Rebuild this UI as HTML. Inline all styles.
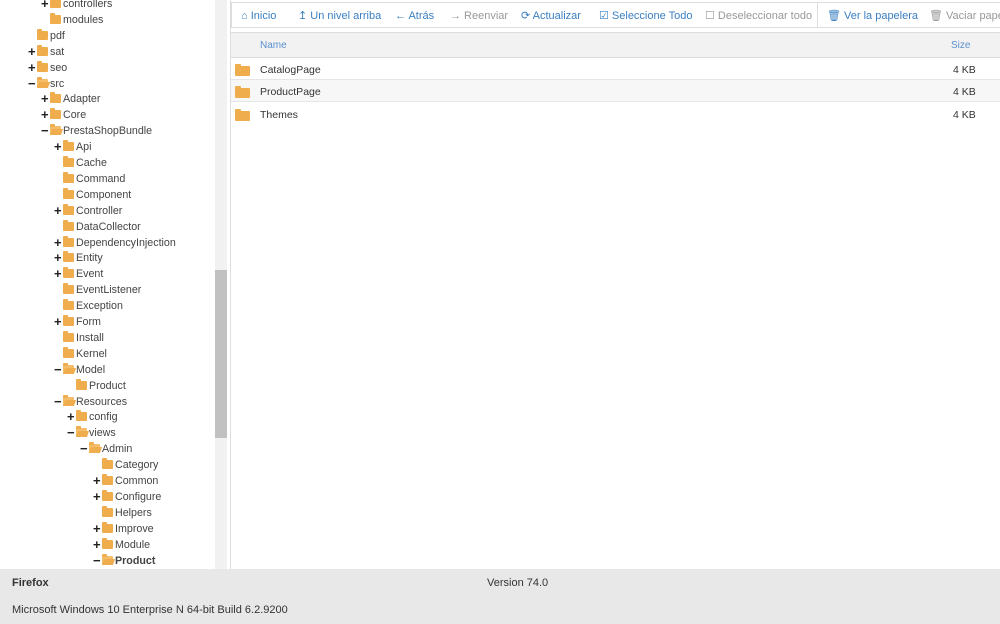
<!DOCTYPE html>
<html><head><meta charset="utf-8"><style>
*{margin:0;padding:0;box-sizing:border-box}
body{width:1000px;height:624px;overflow:hidden;background:#fff;font-family:"Liberation Sans",sans-serif;position:relative;color:#333}
.r{position:absolute;height:16px;font-size:10.7px;line-height:16px;color:#444;white-space:nowrap}
.f{position:absolute;top:3px;width:11px;height:9px;background:#f0ad4e;border-radius:1px}
.f:before{content:"";position:absolute;left:0;top:-2px;width:5px;height:3px;background:#f0ad4e;border-radius:1px 1px 0 0}
.fo{background:#f5bd6a}
.fo:after{content:"";position:absolute;left:1px;top:3px;width:11px;height:6px;background:#f0ad4e;transform:skewX(-20deg)}
.p{position:absolute;top:0;font-weight:bold;font-size:13px;color:#222}
.sb{position:absolute;left:215px;top:0;width:12px;height:569px;background:#f1f1f1}
.th{position:absolute;left:215px;top:270px;width:12px;height:168px;background:#c1c1c1}
.rp{position:absolute;left:230px;top:0;width:770px;height:569px;border-left:1px solid #ddd}
.tb{position:absolute;left:231px;top:2px;width:780px;height:26px;border:1px solid #ddd;font-size:11px;line-height:26px}
.tb span{position:absolute;top:0;color:#3a7fc1;white-space:nowrap}
.tb .d{color:#999}
.hd{position:absolute;left:231px;top:32px;width:769px;height:26px;background:#f2f2f2;border-top:1px solid #ddd;border-bottom:1px solid #ddd;font-size:10px;line-height:26px;color:#5b8fd0}
.row{position:absolute;left:231px;width:769px;height:22px;font-size:10.5px;line-height:24px;color:#333;border-bottom:1px solid #e6e6e6}
.row .f{left:4px;top:8px;width:15px;height:10px}
.row .f:before{width:6px}
.ft{position:absolute;left:0;top:569px;width:1000px;height:55px;background:#e8e8e8;font-size:11px;color:#333}
</style></head><body>
<div class="sb"></div><div class="th"></div>
<div id="tree"></div>
<div class="rp"></div>
<div class="tb">
<span style="left:9px">⌂ Inicio</span>
<span style="left:66px">↥ Un nivel arriba</span>
<span style="left:163px">← Atrás</span>
<span class="d" style="left:218px">→ Reenviar</span>
<span style="left:289px">⟳ Actualizar</span>
<span style="left:367px">☑ Seleccione Todo</span>
<span class="d" style="left:473px">☐ Deseleccionar todo</span>
<span style="left:585px;top:-1px;height:26px;border-left:1px solid #ddd;width:1px"></span>
<span style="left:595px">🗑 Ver la papelera</span>
<span class="d" style="left:697px">🗑 Vaciar papelera</span>
</div>
<div class="hd"><span style="position:absolute;left:29px">Name</span><span style="position:absolute;left:720px">Size</span></div>
<div class="row" style="top:58px"><i class="f"></i><span style="position:absolute;left:29px">CatalogPage</span><span style="position:absolute;left:722px">4 KB</span></div>
<div class="row" style="top:80px;background:#f7f7f7"><i class="f"></i><span style="position:absolute;left:29px">ProductPage</span><span style="position:absolute;left:722px">4 KB</span></div>
<div class="row" style="top:103px;border:0"><i class="f"></i><span style="position:absolute;left:29px">Themes</span><span style="position:absolute;left:722px">4 KB</span></div>
<div class="ft">
<b style="position:absolute;left:12px;top:8px">Firefox</b>
<span style="position:absolute;left:487px;top:8px">Version 74.0</span>
<span style="position:absolute;left:12px;top:35px">Microsoft Windows 10 Enterprise N 64-bit Build 6.2.9200</span>
</div>
<script>
var d=[["controllers",2,"+"],["modules",2,""],["pdf",1,""],["sat",1,"+"],["seo",1,"+"],["src",1,"-"],["Adapter",2,"+"],["Core",2,"+"],["PrestaShopBundle",2,"-"],["Api",3,"+"],["Cache",3,""],["Command",3,""],["Component",3,""],["Controller",3,"+"],["DataCollector",3,""],["DependencyInjection",3,"+"],["Entity",3,"+"],["Event",3,"+"],["EventListener",3,""],["Exception",3,""],["Form",3,"+"],["Install",3,""],["Kernel",3,""],["Model",3,"-"],["Product",4,""],["Resources",3,"-"],["config",4,"+"],["views",4,"-"],["Admin",5,"-"],["Category",6,""],["Common",6,"+"],["Configure",6,"+"],["Helpers",6,""],["Improve",6,"+"],["Module",6,"+"],["Product",6,"-"]];
var h="";
d.forEach(function(x,i){var L=x[1],t=-4+i*15.9;
h+='<div class="r" style="left:0;top:'+t+'px;width:214px">';
if(x[2])h+='<span class="p" style="left:'+(15+13*L)+'px;line-height:15px">'+(x[2]=="+"?"+":"−")+'</span>';
h+='<i class="f'+(x[2]=="-"?" fo":"")+'" style="left:'+(24+13*L)+'px"></i>';
h+='<span style="position:absolute;left:'+(37+13*L)+'px'+(i==35?';font-weight:bold':'')+'">'+x[0]+'</span></div>';});
document.getElementById("tree").innerHTML=h;
</script>
</body></html>
